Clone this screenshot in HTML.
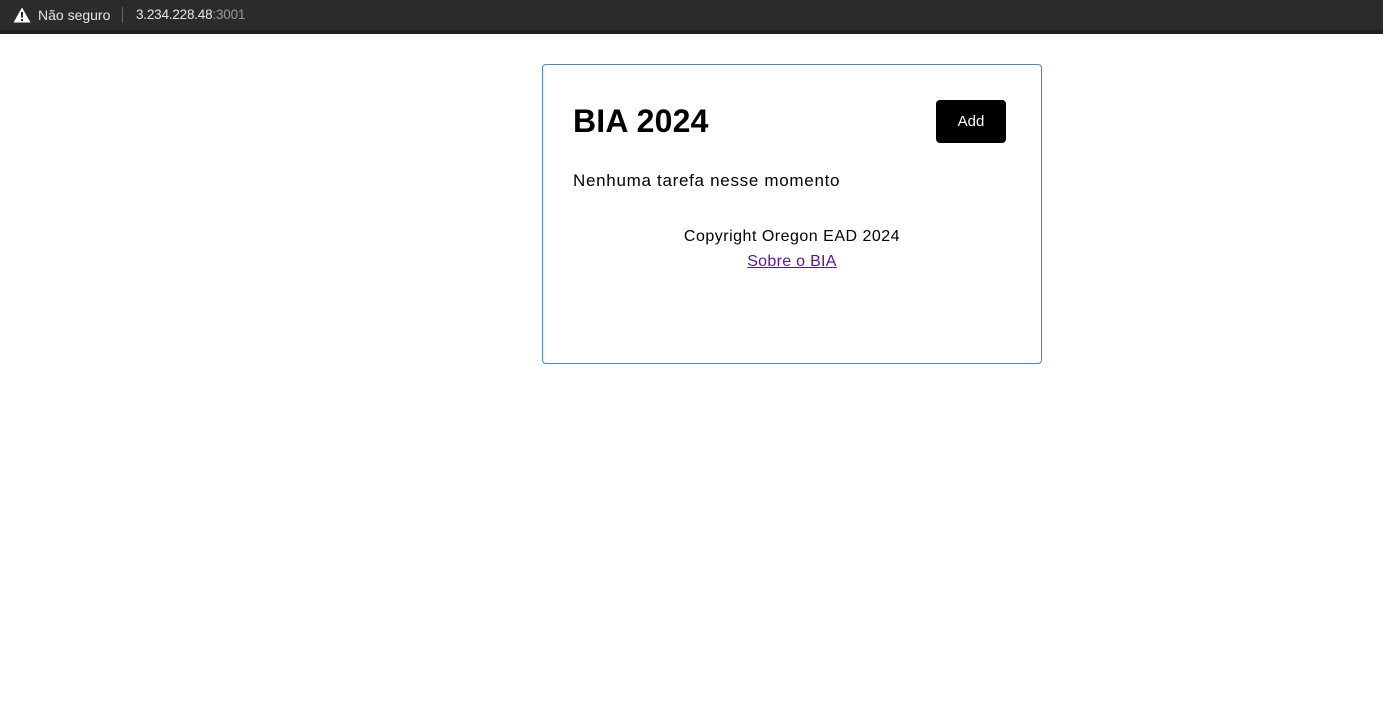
<!DOCTYPE html>
<html><head><meta charset="utf-8"><style>
*{margin:0;padding:0;box-sizing:border-box}
body{width:1383px;height:720px;background:#fff;font-family:"Liberation Sans",sans-serif;position:relative;overflow:hidden}
.bar{position:absolute;left:0;top:0;width:1383px;height:30px;background:#2b2b2b}
.bar2{position:absolute;left:0;top:30px;width:1383px;height:4px;background:#1f1f1f}
.bt{position:absolute;top:7px;font-size:14px;color:#e8e8e8}
.card{position:absolute;left:542px;top:64px;width:500px;height:300px;border:1px solid #4a86c5;border-radius:4px}
h1{position:absolute;left:30px;top:38px;font-size:32px;font-weight:bold;color:#000;letter-spacing:0.2px}
.btn{position:absolute;left:393px;top:35px;width:70px;height:43px;background:#000;border-radius:4px;color:#fff;font-size:15px;text-align:center;line-height:43px}
.t{position:absolute;left:30px;top:106px;font-size:17px;letter-spacing:0.7px;color:#000}
.c{position:absolute;left:0;width:100%;text-align:center;top:163px;font-size:16px;letter-spacing:0.5px;color:#000}
.l{position:absolute;left:0;width:100%;text-align:center;top:188px;font-size:16px;letter-spacing:0.3px;color:#551a8b;text-decoration:underline}
</style></head><body>
<div class="bar"></div><div class="bar2"></div>
<svg style="position:absolute;left:13px;top:7px" width="18" height="16" viewBox="0 0 18 16"><path d="M9 0.5L17.5 15.5H0.5Z" fill="#fff"/><rect x="8" y="5" width="2" height="5.5" fill="#2b2b2b"/><rect x="8" y="12" width="2" height="2" fill="#2b2b2b"/></svg>
<div class="bt" style="left:38px">Não seguro</div>
<div style="position:absolute;left:122px;top:7px;width:1px;height:16px;background:#666"></div>
<div class="bt" style="left:136px;font-size:13.5px;letter-spacing:-0.2px">3.234.228.48<span style="color:#9a9a9a">:3001</span></div>
<div class="card">
<h1>BIA 2024</h1>
<div class="btn">Add</div>
<div class="t">Nenhuma tarefa nesse momento</div>
<div class="c">Copyright Oregon EAD 2024</div>
<div class="l">Sobre o BIA</div>
</div>
</body></html>
